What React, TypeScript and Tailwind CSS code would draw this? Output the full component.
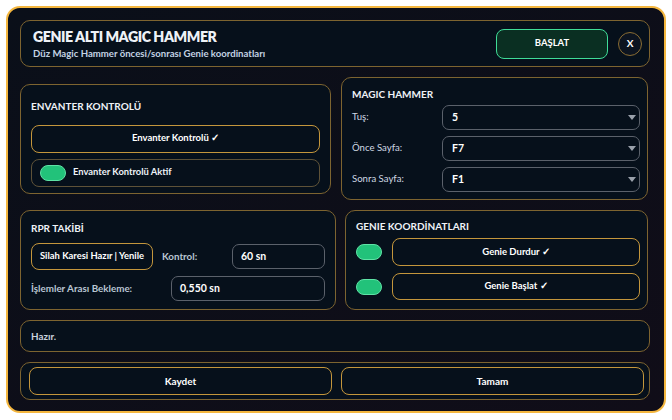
import React from 'react';

const Toggle = () => (
  <div className="w-[26px] h-[16px] shrink-0 rounded-full bg-[#22c27a] border border-[#5fe3a6]" />
);

const Arrow = () => (
  <svg width="8" height="5" viewBox="0 0 8 5" className="mr-[3px]">
    <polygon points="0,0 8,0 4,5" fill="#9aa1ab" />
  </svg>
);

const Select = ({ value }: { value: string }) => (
  <div className="flex-1 h-[25px] rounded-[7px] border border-[#5b616b] bg-[#06101b] flex items-center justify-between pl-[9px]">
    <span className="text-[10.5px] font-bold text-white">{value}</span>
    <Arrow />
  </div>
);

const App: React.FC = () => {
  return (
    <div className="w-[672px] h-[420px] bg-white p-[6px] font-['Lato',sans-serif] text-[#eef2f7]">
      <div className="h-[407px] rounded-[14px] border-2 border-[#f4b63e] bg-linear-to-br from-[#0a0f19] to-[#100d18] pt-[12px] pl-[12px] pr-[14px] flex flex-col gap-[10px]">
        {/* Header */}
        <div className="h-[47px] rounded-[10px] border border-[#7d6430] bg-[#06101b] flex items-center justify-between pl-[12px] pr-[7px]">
          <div>
            <div className="text-[14.2px] font-extrabold leading-[18px] tracking-[-0.45px]">GENIE ALTI MAGIC HAMMER</div>
            <div className="text-[9.6px] font-bold leading-[13px] mt-[1px] text-[#c3d3e4]">
              Düz Magic Hammer öncesi/sonrası Genie koordinatları
            </div>
          </div>
          <div className="flex items-center">
            <button className="w-[112px] h-[30px] rounded-[8px] border border-[#3fdc98] bg-[#0a2f22] text-[9.5px] font-bold text-white">
              BAŞLAT
            </button>
            <button className="ml-[10px] w-[24px] h-[24px] rounded-full border border-[#8a6d33] bg-[#0c1420] text-[10px] font-bold text-white flex items-center justify-center">
              X
            </button>
          </div>
        </div>

        {/* Row 1 */}
        <div className="grid grid-cols-[311px_307px] gap-[10px] items-center">
          <div className="h-[110px] rounded-[10px] border border-[#7d6430] bg-[#06101b] px-[10px] pt-[14px]">
            <div className="text-[10px] font-bold leading-[14px]">ENVANTER KONTROLÜ</div>
            <button className="mt-[12px] w-full h-[28px] rounded-[8px] border border-[#c4963c] text-[9.5px] font-bold text-white flex items-center justify-center">
              Envanter Kontrolü ✓
            </button>
            <div className="mt-[6px] h-[28px] rounded-[8px] border border-[#5e5238] flex items-center pl-[8px]">
              <Toggle />
              <span className="ml-[7px] text-[9.4px] font-bold">Envanter Kontrolü Aktif</span>
            </div>
          </div>

          <div className="h-[123px] rounded-[10px] border border-[#7d6430] bg-[#06101b] pl-[10px] pr-[7px] pt-[9px]">
            <div className="text-[10px] font-bold leading-[14px]">MAGIC HAMMER</div>
            <div className="mt-[4px] flex flex-col gap-[6px]">
              <div className="flex items-center">
                <span className="w-[90px] text-[9.6px] text-[#cfd8e3]">Tuş:</span>
                <Select value="5" />
              </div>
              <div className="flex items-center">
                <span className="w-[90px] text-[9.6px] text-[#cfd8e3]">Önce Sayfa:</span>
                <Select value="F7" />
              </div>
              <div className="flex items-center">
                <span className="w-[90px] text-[9.6px] text-[#cfd8e3]">Sonra Sayfa:</span>
                <Select value="F1" />
              </div>
            </div>
          </div>
        </div>

        {/* Row 2 */}
        <div className="grid grid-cols-[316px_303px] gap-[9px]">
          <div className="h-[100px] rounded-[10px] border border-[#7d6430] bg-[#06101b] px-[10px] pt-[10px]">
            <div className="text-[10px] font-bold leading-[14px]">RPR TAKİBİ</div>
            <div className="mt-[8px] flex items-center">
              <button className="w-[122px] h-[27px] rounded-[8px] border border-[#c4963c] text-[9.4px] font-bold text-white">
                Silah Karesi Hazır | Yenile
              </button>
              <span className="ml-[9px] text-[9.8px] font-bold text-[#b9c6d3]">Kontrol:</span>
              <div className="ml-auto w-[93px] h-[25px] rounded-[7px] border border-[#5b616b] flex items-center pl-[8px]">
                <span className="text-[10.5px] font-bold text-white">60 sn</span>
              </div>
            </div>
            <div className="mt-[6px] flex items-center">
              <span className="text-[9.8px] font-bold text-[#b9c6d3]">İşlemler Arası Bekleme:</span>
              <div className="ml-auto w-[154px] h-[25px] rounded-[7px] border border-[#5b616b] flex items-center pl-[8px]">
                <span className="text-[10.5px] font-bold text-white">0,550 sn</span>
              </div>
            </div>
          </div>

          <div className="h-[100px] rounded-[10px] border border-[#7d6430] bg-[#06101b] pl-[10px] pr-[7px] pt-[8px]">
            <div className="text-[10px] font-bold leading-[14px]">GENIE KOORDİNATLARI</div>
            <div className="mt-[5px] flex items-center">
              <Toggle />
              <button className="ml-[10px] flex-1 h-[28px] rounded-[8px] border border-[#c4963c] text-[9.5px] font-bold text-white">
                Genie Durdur ✓
              </button>
            </div>
            <div className="mt-[7px] flex items-center">
              <Toggle />
              <button className="ml-[10px] flex-1 h-[27px] rounded-[8px] border border-[#c4963c] text-[9.5px] font-bold text-white">
                Genie Başlat ✓
              </button>
            </div>
          </div>
        </div>

        {/* Status */}
        <div className="h-[32px] rounded-[10px] border border-[#7d6430] bg-[#06101b] flex items-center pl-[10px]">
          <span className="text-[9.8px] font-bold text-[#c9d3de]">Hazır.</span>
        </div>

        {/* Footer */}
        <div className="h-[38px] rounded-[10px] border border-[#7d6430] bg-[#06101b] grid grid-cols-2 gap-[9px] items-center pl-[8px] pr-[5px]">
          <button className="h-[28px] rounded-[8px] border border-[#c4963c] text-[10px] font-bold text-white">
            Kaydet
          </button>
          <button className="h-[28px] rounded-[8px] border border-[#c4963c] text-[10px] font-bold text-white">
            Tamam
          </button>
        </div>
      </div>
    </div>
  );
};

export default App;
